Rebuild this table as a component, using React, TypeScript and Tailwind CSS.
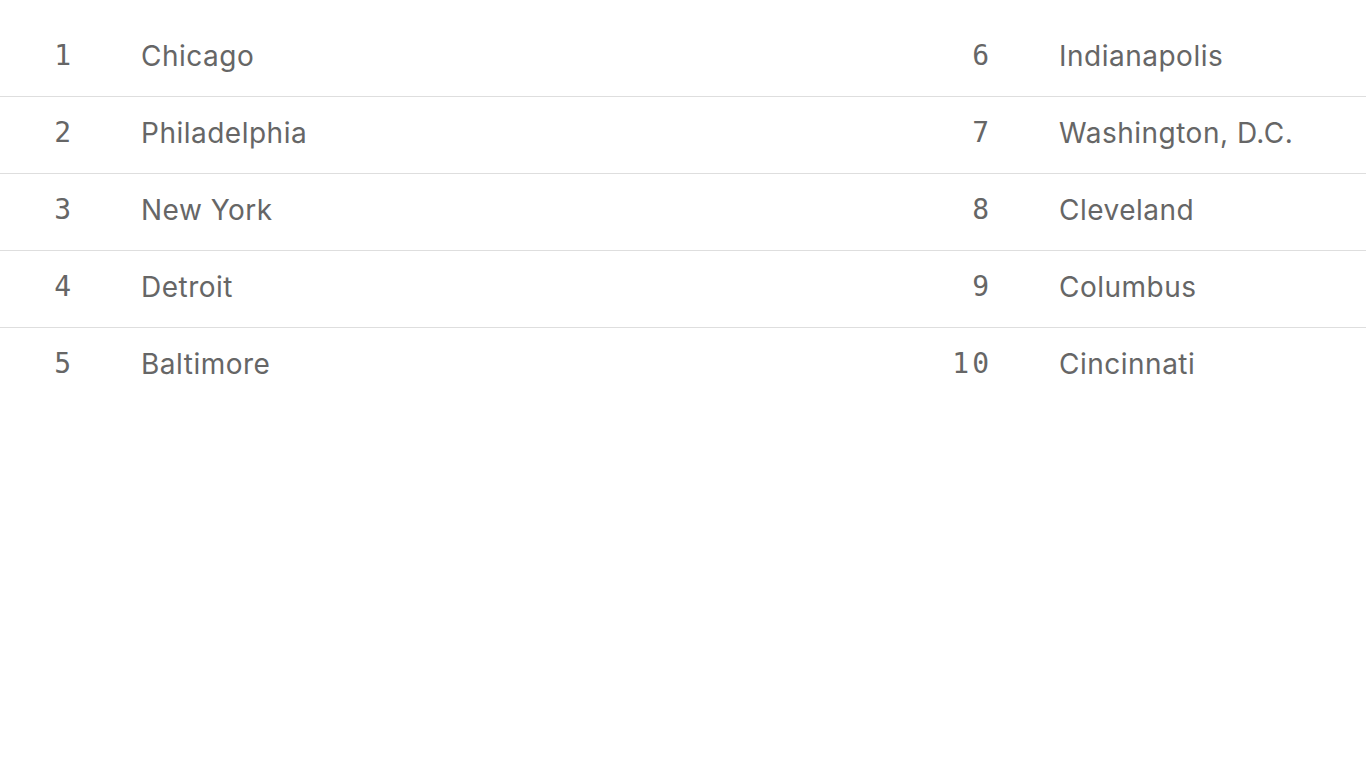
import React from 'react';

const rows: [number, string, number, string][] = [
  [1, 'Chicago', 6, 'Indianapolis'],
  [2, 'Philadelphia', 7, 'Washington, D.C.'],
  [3, 'New York', 8, 'Cleveland'],
  [4, 'Detroit', 9, 'Columbus'],
  [5, 'Baltimore', 10, 'Cincinnati'],
];

const numClass =
  "text-right font-['DejaVu_Sans_Mono',monospace] text-[28px] leading-[34px] tracking-[3px] -mr-[3px]";
const cityClass = "pl-[70px] font-['Inter',sans-serif] text-[28px] leading-[34px] tracking-[0.5px]";

const App: React.FC = () => {
  return (
    <div className="min-h-screen bg-white pt-[20px] text-[#666666]">
      <div>
        {rows.map(([n1, c1, n2, c2], i) => (
          <div
            key={n1}
            className={`grid grid-cols-[71px_847px_71px_377px] items-center h-[77px] pb-[5px] ${
              i < rows.length - 1 ? 'border-b border-[#dedede]' : ''
            }`}
          >
            <div className={numClass}>{n1}</div>
            <div className={cityClass}>{c1}</div>
            <div className={numClass}>{n2}</div>
            <div className={cityClass}>{c2}</div>
          </div>
        ))}
      </div>
    </div>
  );
};

export default App;
